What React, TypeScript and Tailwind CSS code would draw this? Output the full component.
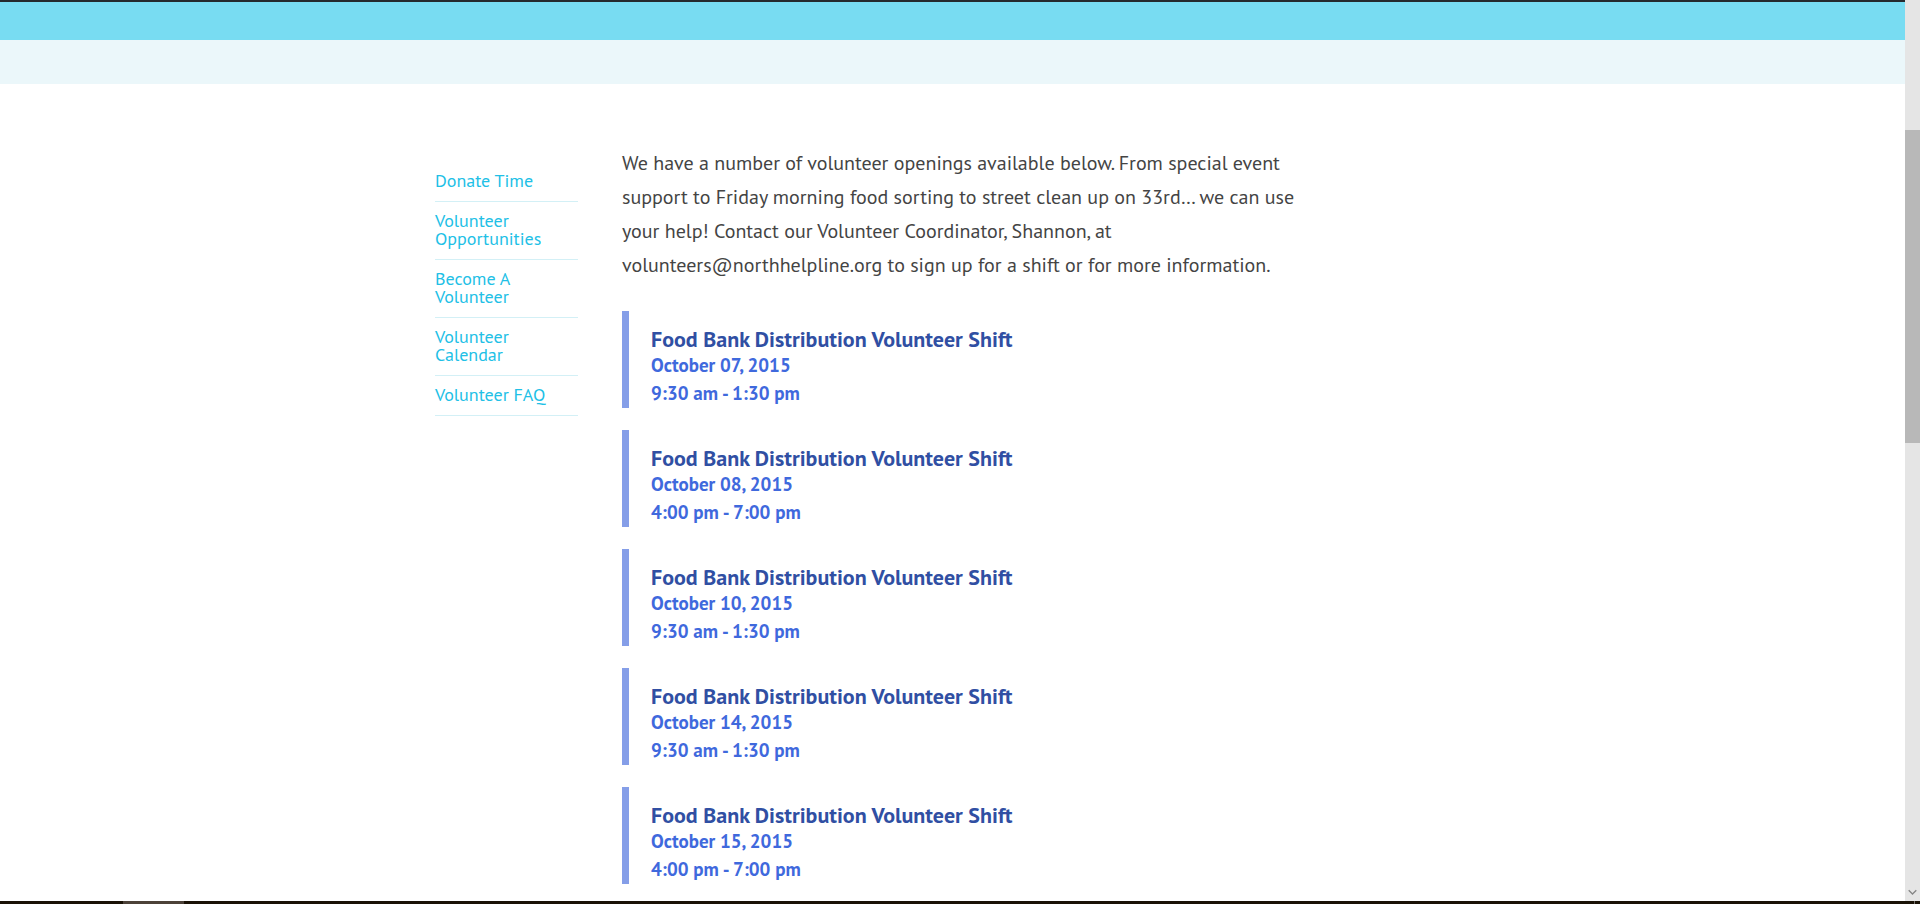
const links = [
  "Donate Time",
  "Volunteer Opportunities",
  "Become A Volunteer",
  "Volunteer Calendar",
  "Volunteer FAQ",
];

const shifts = [
  { date: "October 07, 2015", time: "9:30 am - 1:30 pm" },
  { date: "October 08, 2015", time: "4:00 pm - 7:00 pm" },
  { date: "October 10, 2015", time: "9:30 am - 1:30 pm" },
  { date: "October 14, 2015", time: "9:30 am - 1:30 pm" },
  { date: "October 15, 2015", time: "4:00 pm - 7:00 pm" },
];

function SideNav() {
  return (
    <nav aria-label="Volunteer" className="w-[143px] shrink-0 pt-[78px]">
      <ul>
        {links.map((label) => (
          <li key={label} className="border-b border-[#d3f0f6] pt-[10px] pb-[11px]">
            <a href="#" className="block pr-6 text-[18px] leading-[18px] text-[#21c0e6]">
              {label}
            </a>
          </li>
        ))}
      </ul>
    </nav>
  );
}

function ShiftCard({ date, time }: { date: string; time: string }) {
  return (
    <li className="border-l-7 border-[#859ee8] pt-4 pb-px pl-[22px] font-bold">
      <h2 className="text-[22px] leading-6 text-[#304fa3]">
        Food Bank Distribution Volunteer Shift
      </h2>
      <p className="text-[19px] leading-7 text-[#3f69dd]">{date}</p>
      <p className="text-[19px] leading-7 text-[#3f69dd]">{time}</p>
    </li>
  );
}

function ScrollTrack() {
  return (
    <div aria-hidden="true" className="flex w-[15px] shrink-0 flex-col items-center bg-[#e5e5e5] pt-[130px] pb-1">
      <div className="h-[313px] w-full bg-[#b8b8b8]" />
      <svg className="mt-auto" width="9" height="8" viewBox="0 0 9 8" fill="none" stroke="#858585" strokeWidth="1.3">
        <path d="M.7 1.2 4.5 5 8.3 1.2" />
      </svg>
    </div>
  );
}

export default function App() {
  return (
    <div className="flex h-screen flex-col bg-white font-['PT_Sans','Lato',sans-serif]">
      <div className="flex min-h-0 flex-1">
        <div className="flex-1 overflow-hidden">
          <header>
            <div className="h-10 border-t-2 border-[#252a2e] bg-[#78dcf2]" />
            <div className="h-11 bg-[#ebf7fa]" />
          </header>
          <div className="mx-auto flex max-w-[1035px] gap-11">
            <SideNav />
            <main className="min-w-0 max-w-[690px] flex-1 pt-[62px]">
              <p className="text-[20px] leading-[34px] text-[#444444]">
                We have a number of volunteer openings available below. From special event support to
                Friday morning food sorting to street clean up on 33rd… we can use your help! Contact
                our Volunteer Coordinator, Shannon, at volunteers@northhelpline.org to sign up for a
                shift or for more information.
              </p>
              <ul className="mt-[29px] flex flex-col gap-[22px]">
                {shifts.map((shift) => (
                  <ShiftCard key={shift.date} {...shift} />
                ))}
              </ul>
            </main>
          </div>
        </div>
        <ScrollTrack />
      </div>
      <footer className="flex h-[3px] shrink-0 bg-[#1a1206] pl-[123px]">
        <div className="w-[61px] bg-[#4c4138]" />
        <div className="mr-[5px] ml-auto w-px bg-[#77736d]" />
      </footer>
    </div>
  );
}
